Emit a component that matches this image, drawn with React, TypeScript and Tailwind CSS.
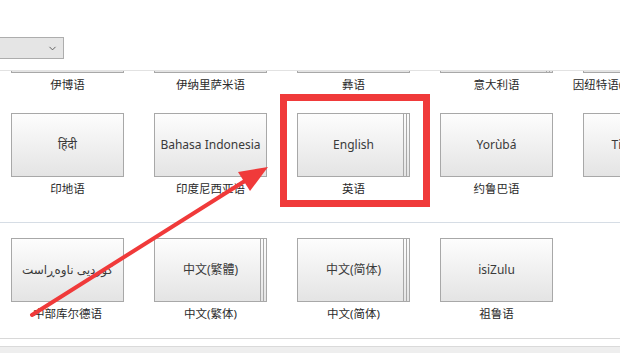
import { ChevronDown } from 'lucide-react';

type Lang = { native: string; name: string; stacked?: boolean };

const rows: Lang[][] = [
  [
    { native: 'Igbo', name: '伊博语' },
    { native: 'anarâškielâ', name: '伊纳里萨米语' },
    { native: 'ꆈꌠꁱꂷ', name: '彝语' },
    { native: 'Italiano', name: '意大利语', stacked: true },
    { native: 'Inuktitut', name: '因纽特语(拉丁语，加拿大)' },
  ],
  [
    { native: 'हिंदी', name: '印地语' },
    { native: 'Bahasa Indonesia', name: '印度尼西亚语' },
    { native: 'English', name: '英语', stacked: true },
    { native: 'Yorùbá', name: '约鲁巴语' },
    { native: 'Tiếng Việt', name: '越南语' },
  ],
];

const lastRow: Lang[] = [
  { native: 'کوردیی ناوەڕاست', name: '中部库尔德语' },
  { native: '中文(繁體)', name: '中文(繁体)', stacked: true },
  { native: '中文(简体)', name: '中文(简体)', stacked: true },
  { native: 'isiZulu', name: '祖鲁语' },
];

const face = 'absolute top-0 left-0 h-[64px] border border-[#a8a8a8] bg-gradient-to-b from-[#fdfdfd] to-[#e4e4e4]';

function Tile({ lang }: { lang: Lang }) {
  return (
    <div className="w-[113px] shrink-0 flex flex-col items-center">
      <div className="relative w-[113px] h-[64px]">
        {lang.stacked && (
          <>
            <div className={`${face} w-[113px]`} />
            <div className={`${face} w-[110px]`} />
          </>
        )}
        <div className={`${face} ${lang.stacked ? 'w-[107px]' : 'w-[113px]'}`} />
        <div className="absolute inset-0 flex items-center justify-center text-[12px] text-[#3a3a3a] whitespace-nowrap">
          {lang.native}
        </div>
      </div>
      <div className="mt-[4px] leading-[16px] text-[11.5px] text-[#2a2a2a] whitespace-nowrap">{lang.name}</div>
    </div>
  );
}

function Row({ items }: { items: Lang[] }) {
  return (
    <div className="flex gap-[30px] pl-[11px]">
      {items.map((l) => (
        <Tile key={l.name} lang={l} />
      ))}
    </div>
  );
}

export default function App() {
  return (
    <div className="relative w-[620px] h-[353px] overflow-hidden bg-white font-['Noto_Sans','DejaVu_Sans','Noto_Sans_CJK_SC',sans-serif]">
      {/* Header with dropdown */}
      <div className="h-[70px] pt-[37px]">
        <div className="w-[64px] h-[22px] bg-[#e5e5e5] border border-l-0 border-[#adadad] flex items-center justify-end pr-[5px]">
          <ChevronDown className="w-[11px] h-[11px] text-[#555]" strokeWidth={2} />
        </div>
      </div>

      {/* Language list (scrolled) */}
      <div className="border-t border-[#e2e2e2] overflow-hidden">
        <div className="-mt-[62px] flex flex-col gap-[20px] pb-[25px]">
          {rows.map((r, i) => (
            <Row key={i} items={r} />
          ))}
        </div>
        <div className="border-t border-[#d6dde5] pt-[15px] pb-[16px]">
          <Row items={lastRow} />
        </div>
      </div>

      {/* Bottom */}
      <div className="border-t border-[#d8d8d8] h-[8px]" />
      <div className="border-t border-[#dadada] h-[10px] bg-[#eeeeee]" />

      {/* Annotation: red box */}
      <div className="absolute left-[280px] top-[94px] w-[150px] h-[113px] border-[7px] border-[#f03a3a]" />

      {/* Annotation: red arrow */}
      <svg className="absolute inset-0 pointer-events-none" width="620" height="353" viewBox="0 0 620 353">
        <line x1="32" y1="315" x2="248" y2="179" stroke="#f03a3a" strokeWidth="4" strokeLinecap="round" />
        <polygon points="268,167 250,191 238,172" fill="#f03a3a" />
      </svg>
    </div>
  );
}
